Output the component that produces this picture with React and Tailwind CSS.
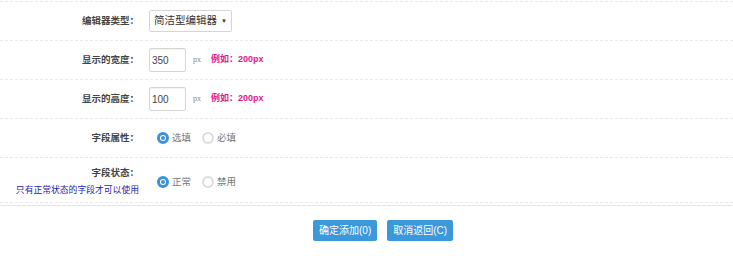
import React from 'react';

const font = "font-['Liberation_Sans','Noto_Sans_CJK_SC',sans-serif]";

const Radio = ({ checked, label }) => (
  <label className="flex items-center mr-[11px]">
    {checked ? (
      <span className="w-[12px] h-[12px] rounded-full border-[3px] border-[#3d91d9] flex items-center justify-center">
        <span className="w-[4px] h-[4px] rounded-full bg-[#3d91d9]" />
      </span>
    ) : (
      <span className="w-[12px] h-[12px] rounded-full border-[2px] border-[#dcdcdc]" />
    )}
    <span className="ml-[3px] text-[9.5px] text-[#777]">{label}</span>
  </label>
);

const Row = ({ label, children, tall, note }) => (
  <div
    className={`flex items-center border-b border-dashed border-[#e8e8e8] ${
      tall ? 'h-[45px]' : 'h-[39px]'
    }`}
  >
    <div className="w-[140px] pr-[1px] text-right">
      <div className={`text-[9.5px] font-bold text-[#444] ${tall ? 'mt-[3px]' : ''}`}>{label}</div>
      {note && <div className="mt-[3px] text-[8.8px] text-[#1c1cb0] whitespace-nowrap">{note}</div>}
    </div>
    <div className={`flex items-center pl-[9px] ${tall ? 'mt-[4px]' : ''}`}>{children}</div>
  </div>
);

const SizeField = ({ value }) => (
  <>
    <div className="w-[37px] h-[24px] border border-[#d5d5d5] rounded-[2px] flex items-center pl-[2px] text-[10px] text-[#444] shadow-[inset_0_1px_1px_rgba(0,0,0,0.05)]">
      {value}
    </div>
    <span className="ml-[7px] text-[8px] text-[#888] font-['Liberation_Serif',serif]">px</span>
    <span className="ml-[10px] text-[9px] font-bold text-[#e0188a]">例如：200px</span>
  </>
);

export default function App() {
  return (
    <div className={`w-[733px] h-[256px] bg-white pt-px ${font}`}>
      <div className="border-t border-dashed border-[#e8e8e8]">
        <Row label="编辑器类型：">
          <div className="w-[83px] h-[22px] border border-[#d5d5d5] rounded-[2px] flex items-center justify-between px-[4px] text-[10.5px] text-[#333]">
            <span>简洁型编辑器</span>
            <span className="text-[6px]">▼</span>
          </div>
        </Row>
        <Row label="显示的宽度：">
          <SizeField value="350" />
        </Row>
        <Row label="显示的高度：">
          <SizeField value="100" />
        </Row>
        <Row label="字段属性：">
          <div className="flex items-center ml-[8px]">
            <Radio checked label="选填" />
            <Radio label="必填" />
          </div>
        </Row>
        <Row label="字段状态：" note="只有正常状态的字段才可以使用" tall>
          <div className="flex items-center ml-[8px]">
            <Radio checked label="正常" />
            <Radio label="禁用" />
          </div>
        </Row>
      </div>
      <div className="mt-[2px] border-t border-[#e3e3e3]" />
      <div className="flex gap-[10px] pl-[313px] pt-[14px]">
        <button className="h-[21px] px-[6px] bg-[#3a98db] text-white text-[10px] rounded-[2px]">
          确定添加(0)
        </button>
        <button className="h-[21px] px-[6px] bg-[#3a98db] text-white text-[10px] rounded-[2px]">
          取消返回(C)
        </button>
      </div>
    </div>
  );
}
